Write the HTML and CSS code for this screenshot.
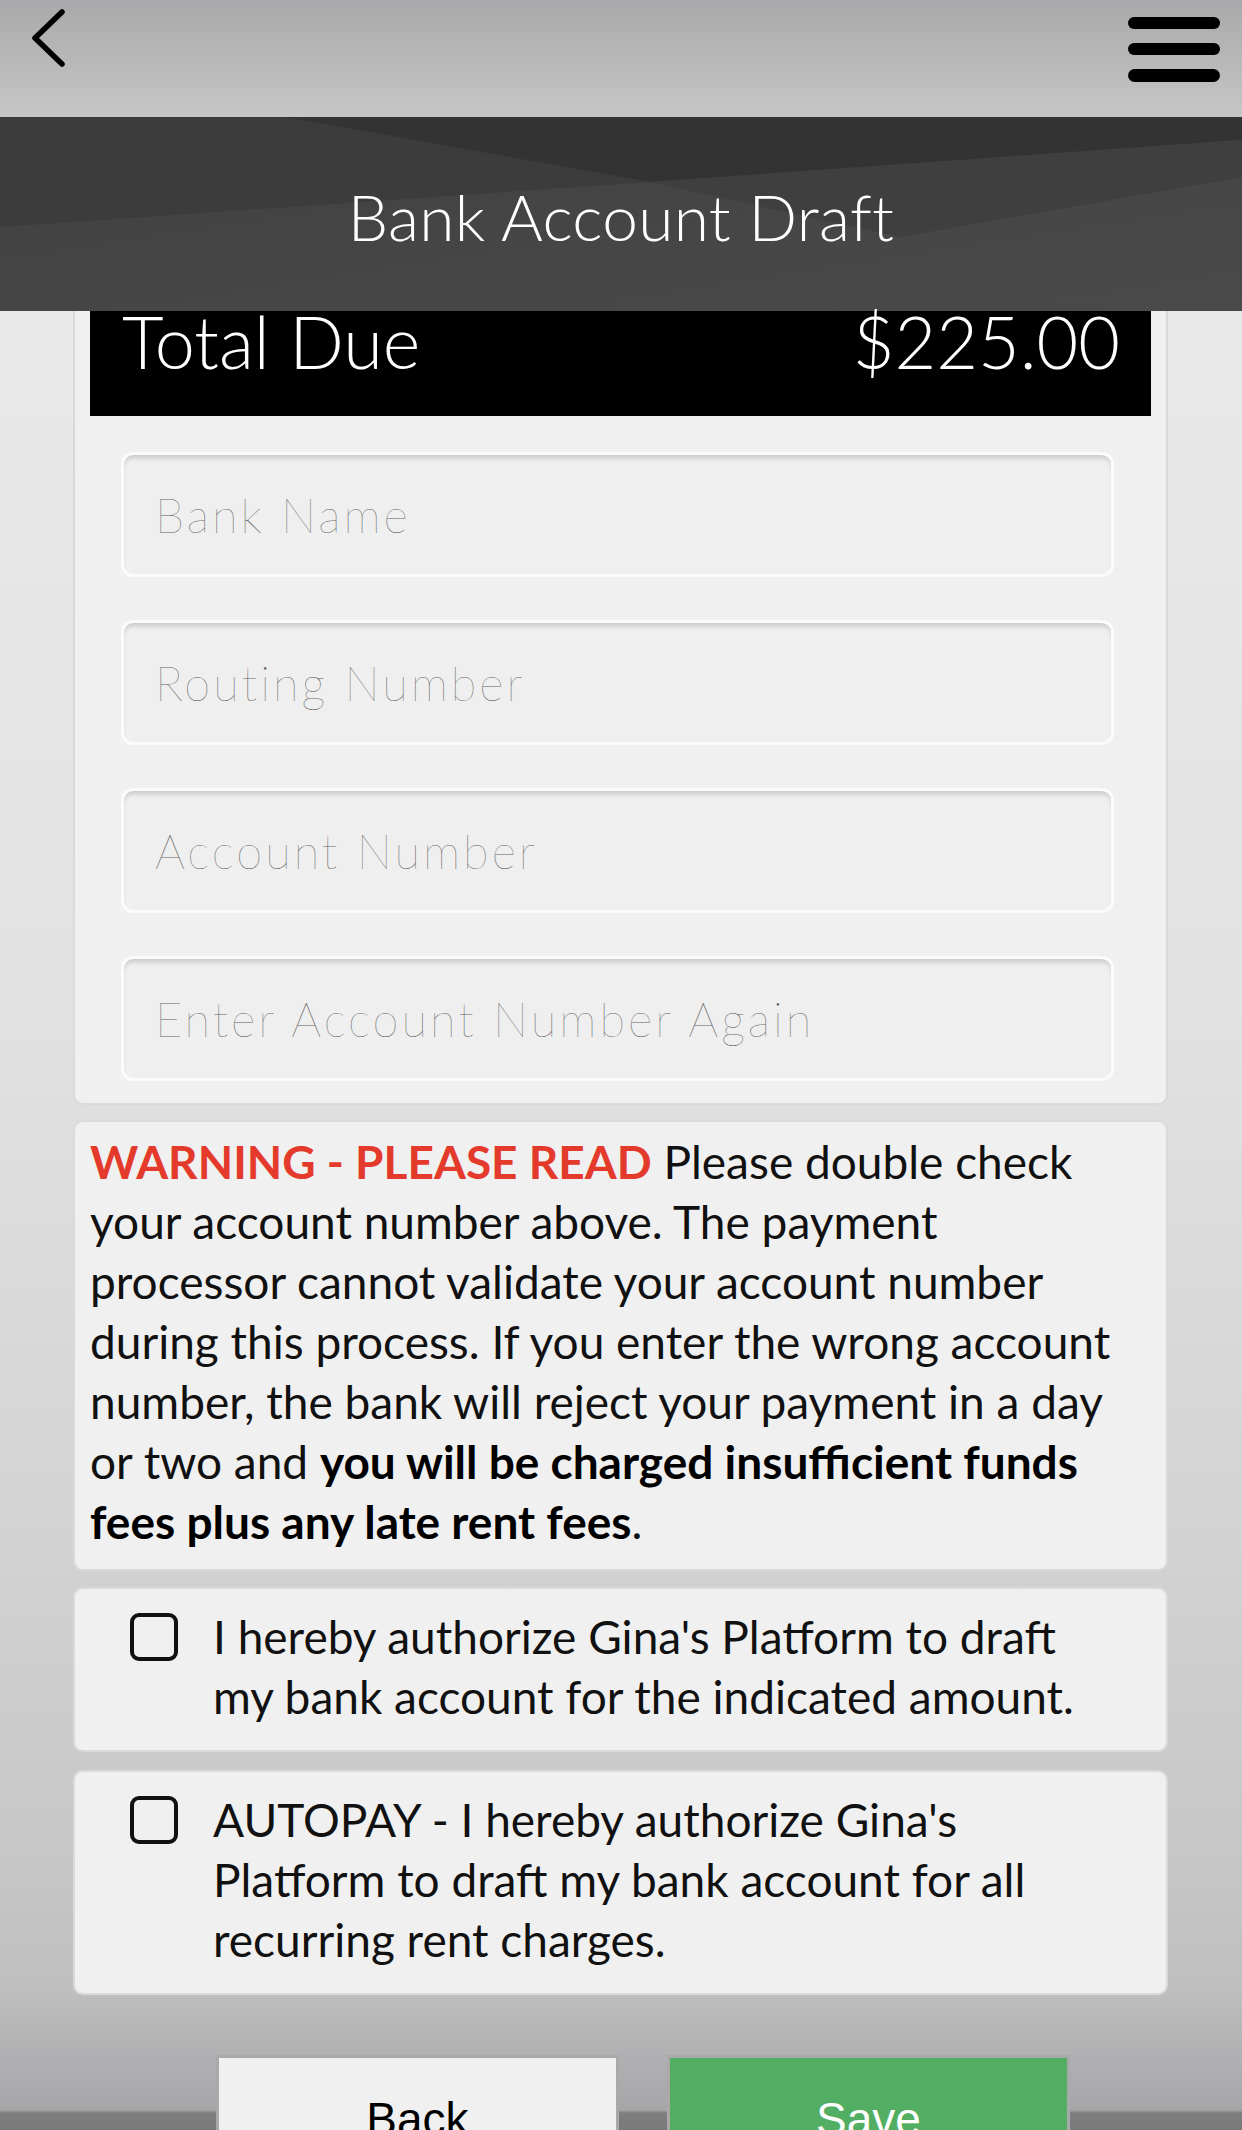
FILE: index.html
```html
<!DOCTYPE html>
<html lang="en">
<head>
<meta charset="utf-8">
<title>Bank Account Draft</title>
<link rel="stylesheet" href="styles.css">
</head>
<body>
  <header class="topbar">
    <svg class="back-icon" width="40" height="64" viewBox="0 0 40 64" aria-label="Back">
      <path d="M34 6 L7 32 L34 58" fill="none" stroke="#000" stroke-width="5.5" stroke-linecap="round" stroke-linejoin="round"/>
    </svg>
    <svg class="menu-icon" width="92" height="66" viewBox="0 0 92 66" aria-label="Menu">
      <rect x="0" y="1" width="92" height="12" rx="6" fill="#000"/>
      <rect x="0" y="27" width="92" height="12" rx="6" fill="#000"/>
      <rect x="0" y="53" width="92" height="13" rx="6.5" fill="#000"/>
    </svg>
  </header>
  <div class="titlebar">
    <h1 class="title">Bank Account Draft</h1>
  </div>

  <main class="content">
    <section class="card form-card">
      <div class="total">
        <span>Total Due</span>
        <span>$225.00</span>
      </div>
      <div class="fields">
        <input class="field" type="text" placeholder="Bank Name">
        <input class="field" type="text" placeholder="Routing Number">
        <input class="field" type="text" placeholder="Account Number">
        <input class="field" type="text" placeholder="Enter Account Number Again">
      </div>
    </section>

    <section class="card warning">
      <p><span class="warn">WARNING - PLEASE READ</span> Please double check your account number above. The payment processor cannot validate your account number during this process. If you enter the wrong account number, the bank will reject your payment in a day or two and <strong>you will be charged insufficient funds fees plus any late rent fees</strong>.</p>
    </section>

    <label class="card check">
      <span class="box"></span>
      <span class="check-text">I hereby authorize Gina's Platform to draft my bank account for the indicated amount.</span>
    </label>

    <label class="card check">
      <span class="box"></span>
      <span class="check-text">AUTOPAY - I hereby authorize Gina's Platform to draft my bank account for all recurring rent charges.</span>
    </label>

    <div class="actions">
      <button class="btn btn-back" type="button">Back</button>
      <button class="btn btn-save" type="button">Save</button>
    </div>
  </main>
</body>
</html>
```

FILE: styles.css
```css
* {
  box-sizing: border-box;
}

html, body {
  margin: 0;
  padding: 0;
}

body {
  height: 2130px;
  overflow: hidden;
  font-family: "Lato", "Liberation Sans", sans-serif;
  color: #111;
  background: linear-gradient(to bottom,
    #c6c6c6 0px,
    #e9e9e9 311px,
    #e2e2e2 1000px,
    #d4d4d4 1500px,
    #c7c7c7 1850px,
    #bfbfbf 1990px,
    #b2b2b4 2050px,
    #a6a6a8 2110px,
    #7e7e7e 2113px,
    #7a7a7a 2130px);
}

/* top bar */
.topbar {
  height: 117px;
  display: flex;
  justify-content: space-between;
  align-items: flex-start;
  padding: 0 22px 0 28px;
  background: linear-gradient(to bottom, #a9a9ab, #c6c6c6);
}

.back-icon {
  margin-top: 6px;
  display: block;
}

.menu-icon {
  margin-top: 16px;
  display: block;
}

/* title band */
.titlebar {
  height: 194px;
  display: flex;
  align-items: center;
  justify-content: center;
  padding-top: 4px;
  background-color: #454545;
  background-image: url("data:image/svg+xml;utf8,<svg xmlns='http://www.w3.org/2000/svg' width='1242' height='194' viewBox='0 0 1242 194' preserveAspectRatio='none'><defs><linearGradient id='g' x1='0' y1='0' x2='1' y2='1'><stop offset='0' stop-color='%23404040'/><stop offset='1' stop-color='%234a4a4a'/></linearGradient></defs><rect width='1242' height='194' fill='url(%23g)'/><polygon points='0,0 285,0 650,65 0,110' fill='%233c3c3c'/><polygon points='285,0 1242,0 1242,23 650,65' fill='%23333333'/><polygon points='650,65 1242,23 1242,60 900,120' fill='%233f3f3f'/></svg>");
  background-size: 100% 100%;
}

.title {
  margin: 0;
  font-family: "Lato", sans-serif;
  font-weight: 300;
  font-size: 64px;
  color: #fff;
  letter-spacing: 0.3px;
}

/* content */
.content {
  padding: 0 74px 0 73px;
}

.card {
  background: #f0f0f0;
  border: 2px solid #dadada;
  border-radius: 10px;
}

.form-card {
  border-top: 0;
  border-radius: 0 0 10px 10px;
  padding: 0 15px 22px;
}

.total {
  background: #000;
  color: #fff;
  display: flex;
  justify-content: space-between;
  font-weight: 300;
  font-size: 72px;
  line-height: 60px;
  height: 105px;
  padding: 0 31px 0 32px;
}

.fields {
  display: flex;
  flex-direction: column;
  gap: 43px;
  padding: 36px 37px 0 31px;
}

.field {
  display: block;
  width: 100%;
  height: 125px;
  margin: 0;
  border: 3px solid #fbfbfb;
  border-radius: 12px;
  background: #efefef;
  box-shadow: inset 0 5px 5px -2px rgba(0, 0, 0, 0.16);
  padding: 0 20px 0 31px;
  font-family: "Lato", sans-serif;
  font-weight: 200;
  font-size: 47px;
  letter-spacing: 3px;
  color: #333;
  outline: none;
}

.field::placeholder {
  color: #5f5f5f;
  opacity: 1;
}

.warning {
  margin-top: 15px;
  padding: 10px 32px 17px 15px;
}

.warning p {
  margin: 0;
  font-size: 46px;
  line-height: 60px;
  font-weight: 400;
  color: #111;
}

.warn {
  color: #e33a2b;
  font-weight: 700;
}

.warning strong {
  font-weight: 700;
  color: #000;
}

.check {
  display: flex;
  align-items: flex-start;
  gap: 35px;
  padding: 18px 46px 23px 55px;
  margin-top: 16px;
}

.check + .check {
  margin-top: 18px;
}

.box {
  flex: none;
  width: 48px;
  height: 48px;
  margin-top: 6px;
  border: 4px solid #111;
  border-radius: 9px;
}

.check-text {
  font-size: 46px;
  line-height: 60px;
  font-weight: 400;
  color: #111;
}

.actions {
  display: flex;
  gap: 48px;
  margin-top: 60px;
  padding-left: 143px;
}

.btn {
  flex: none;
  width: 403px;
  height: 128px;
  border: 3px solid #a9a9a9;
  border-radius: 0;
  font-family: "Liberation Sans", Arial, sans-serif;
  font-size: 46px;
  padding: 0;
}

.btn-back {
  background: #f0f0f0;
  color: #000;
}

.btn-save {
  background: #52ae62;
  color: #fff;
}
```
